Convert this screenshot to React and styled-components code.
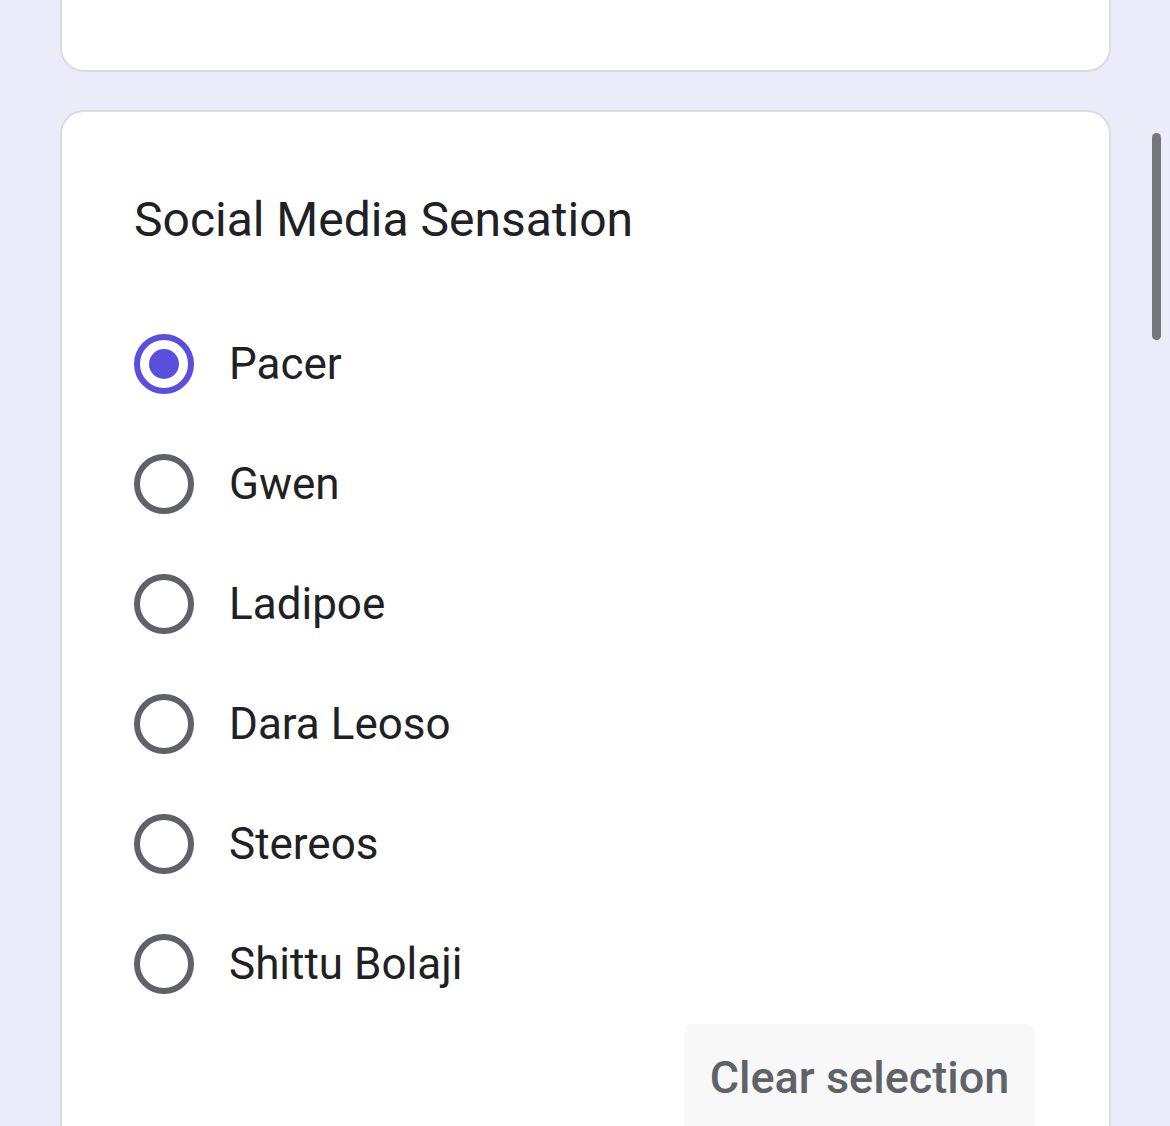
import React from 'react';
import styled, { createGlobalStyle } from 'styled-components';

const options = ['Pacer', 'Gwen', 'Ladipoe', 'Dara Leoso', 'Stereos', 'Shittu Bolaji'];

const App = () => {
    return (
        <>
            <Global />
            <Page>
                <TopCard />
                <Card>
                    <Title>Social Media Sensation</Title>
                    <List>
                        {options.map((name, i) => (
                            <Option key={name}>
                                <Radio checked={i === 0}>{i === 0 && <Dot />}</Radio>
                                <Label>{name}</Label>
                            </Option>
                        ))}
                    </List>
                    <Actions>
                        <ClearButton>Clear selection</ClearButton>
                    </Actions>
                </Card>
            </Page>
            <ScrollThumb />
        </>
    );
};

export default App;

const Global = createGlobalStyle`
    html, body {
        margin: 0;
        padding: 0;
        background: #ecebf9;
        overflow: hidden;
    }
    body {
        font-family: Roboto, "Liberation Sans", sans-serif;
    }
`;

const Page = styled.div`
    width: 1051px;
    margin-left: 60px;
    display: flex;
    flex-direction: column;
    gap: 38px;
`;

const TopCard = styled.div`
    box-sizing: border-box;
    margin-top: -40px;
    height: 112px;
    background: #fff;
    border: 2px solid #dadce0;
    border-radius: 24px;
`;

const Card = styled.div`
    box-sizing: border-box;
    height: 1100px;
    background: #fff;
    border: 2px solid #dadce0;
    border-radius: 24px;
    padding: 80px 74px 0 72px;
`;

const Title = styled.h2`
    margin: 0;
    font-size: 48px;
    line-height: 56px;
    font-weight: 400;
    color: #202124;
`;

const List = styled.div`
    margin-top: 56px;
    display: flex;
    flex-direction: column;
`;

const Option = styled.div`
    height: 120px;
    display: flex;
    align-items: center;
    gap: 35px;
`;

const Radio = styled.div`
    box-sizing: border-box;
    width: 60px;
    height: 60px;
    border-radius: 50%;
    border: 6px solid ${p => (p.checked ? '#5a4fdc' : '#5f6368')};
    display: flex;
    align-items: center;
    justify-content: center;
`;

const Dot = styled.div`
    width: 30px;
    height: 30px;
    border-radius: 50%;
    background: #5a4fdc;
`;

const Label = styled.span`
    font-size: 44px;
    color: #202124;
`;

const Actions = styled.div`
    display: flex;
    justify-content: flex-end;
`;

const ClearButton = styled.button`
    box-sizing: border-box;
    width: 351px;
    height: 120px;
    border: none;
    border-radius: 8px;
    background: #f8f8f8;
    color: #5f6368;
    font-family: Roboto, "Liberation Sans", sans-serif;
    font-size: 45px;
    font-weight: 500;
    padding: 27px 0 0 0;
    display: flex;
    justify-content: center;
    align-items: flex-start;
`;

const ScrollThumb = styled.div`
    position: fixed;
    left: 1152px;
    top: 133px;
    width: 9px;
    height: 207px;
    border-radius: 5px;
    background: #77767d;
`;
